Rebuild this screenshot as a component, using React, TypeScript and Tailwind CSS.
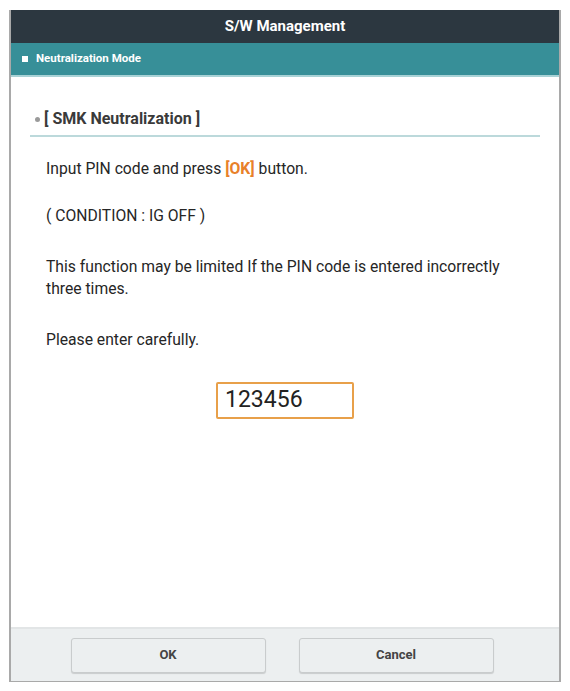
export default function App() {
  return (
    <div className="w-[570px] h-[691px] bg-white pt-[10px] pl-[9px]" style={{ fontFamily: 'Roboto, "Liberation Sans", sans-serif' }}>
      <div className="w-[552px] h-[672px] flex flex-col border-x-2 border-b border-[#a9a9a9]">
        <div className="h-[33px] bg-[#2c3740] flex items-center justify-center text-white text-[15px] font-bold">
          S/W Management
        </div>
        <div className="h-[34px] bg-[#378f98] flex items-center pl-[11px] gap-[8px] text-white text-[11.5px] font-bold border-b-2 border-[#a8d2d6]">
          <span className="w-[6px] h-[6px] bg-white" />
          Neutralization Mode
        </div>
        <div className="flex-1 px-[19px] pt-[30px] text-[#262626]">
          <div className="flex items-center gap-[4px] pb-[4px] border-b-2 border-[#bcd9db] pl-[5px] text-[16px] font-bold text-[#3a3a3a]">
            <span className="w-[5px] h-[5px] rounded-full bg-[#9a9a9a]" />
            [ SMK Neutralization ]
          </div>
          <div className="pl-[16px] text-[15.7px] leading-[22px]">
            <p className="mt-[21px]">
              Input PIN code and press <span className="text-[#e8812a] font-bold">[OK]</span> button.
            </p>
            <p className="mt-[25px]">( CONDITION : IG OFF )</p>
            <p className="mt-[29px]">
              This function may be limited If the PIN code is entered incorrectly
              <br />
              three times.
            </p>
            <p className="mt-[29px]">Please enter carefully.</p>
          </div>
          <div className="flex justify-center mt-[31px]">
            <div className="w-[138px] h-[37px] border-2 border-[#e8a04a] rounded-[2px] flex items-center px-[7px] text-[23px] text-[#222]">
              123456
            </div>
          </div>
        </div>
        <div className="h-[54px] bg-[#eceff0] border-t-2 border-[#e2e5e6] flex items-center justify-center gap-[33px] pr-[6px]">
          <button className="w-[195px] h-[35px] rounded-[3px] border border-[#c9cccd] bg-[#eceff0] shadow-[0_1px_1px_rgba(0,0,0,0.15)] text-[13px] font-bold text-[#444]">
            OK
          </button>
          <button className="w-[195px] h-[35px] rounded-[3px] border border-[#c9cccd] bg-[#eceff0] shadow-[0_1px_1px_rgba(0,0,0,0.15)] text-[13px] font-bold text-[#444]">
            Cancel
          </button>
        </div>
      </div>
    </div>
  )
}
